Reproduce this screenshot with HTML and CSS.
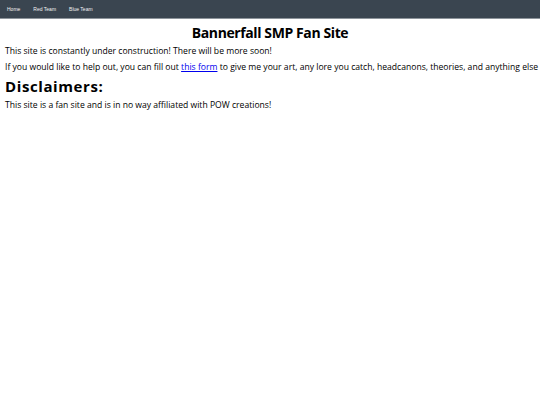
FILE: index.html
```html
<!DOCTYPE html>
<html>
<head>
<meta charset="utf-8">
<link rel="stylesheet" href="styles.css">
</head>
<body>
<nav class="topnav">
  <a class="nav-link" href="#">Home</a>
  <a class="nav-link" href="#">Red Team</a>
  <a class="nav-link" href="#">Blue Team</a>
</nav>
<main class="content">
  <h1 class="title">Bannerfall SMP Fan Site</h1>
  <p class="text">This site is constantly under construction! There will be more soon!</p>
  <p class="text">If you would like to help out, you can fill out <a class="link" href="#">this form</a> to give me your art, any lore you catch, headcanons, theories, and anything else</p>
  <h2 class="subtitle">Disclaimers:</h2>
  <p class="text">This site is a fan site and is in no way affiliated with POW creations!</p>
</main>
</body>
</html>
```
FILE: styles.css
```css
html, body {
  margin: 0;
  padding: 0;
  background: #ffffff;
}
body {
  font-family: "Comic Sans MS", "Open Sans", sans-serif;
  color: #000;
}
.topnav {
  display: flex;
  align-items: center;
  height: 18px;
  background: #3a4550;
  border-bottom: 1px solid #8d949b;
  padding-left: 7px;
  gap: 13px;
}
.nav-link {
  font-family: "Liberation Sans", Arial, sans-serif;
  font-size: 5px;
  color: #f2f2f2;
  text-decoration: none;
}
.content {
  padding: 5px 5px 0;
}
.title {
  font-size: 14px;
  letter-spacing: -0.4px;
  text-align: center;
  margin: 0 0 3px;
  line-height: 18px;
}
.text {
  font-size: 8.6px;
  margin: 0 0 4px;
  line-height: 12px;
  white-space: nowrap;
}
.subtitle {
  font-size: 15px;
  letter-spacing: 0.6px;
  margin: 0 0 4px;
  line-height: 18px;
}
.link {
  color: #0000ee;
}
```
